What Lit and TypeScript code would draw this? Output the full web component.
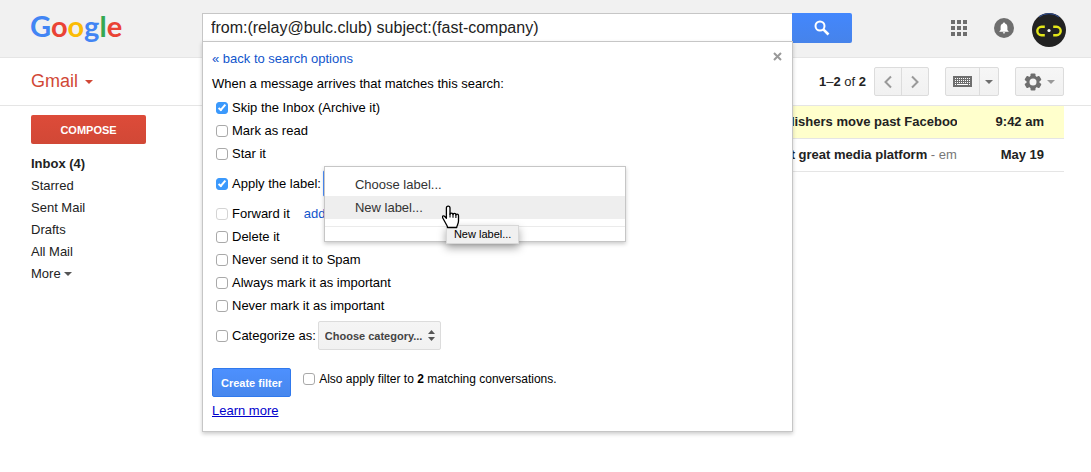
import { LitElement, html, css, svg, nothing } from "lit";
import { customElement, property } from "lit/decorators.js";

const baseStyles = css`
  *,
  *::before,
  *::after {
    box-sizing: border-box;
  }
  button,
  input,
  select {
    font: inherit;
    color: inherit;
    margin: 0;
  }
  button {
    padding: 0;
    cursor: pointer;
  }
  a {
    color: #15c;
    text-decoration: none;
  }
  svg {
    display: block;
  }
`;

interface Mail {
  sender: string;
  subject: string;
  snippet: string;
  date: string;
  selected: boolean;
}

const MAILS: Mail[] = [
  { sender: "Fast Company", subject: "Why publishers move past Facebook", snippet: "", date: "9:42 am", selected: true },
  { sender: "Fast Company", subject: "Your next great media platform", snippet: "email", date: "May 19", selected: false },
];

@customElement("filter-option")
class FilterOption extends LitElement {
  @property() label = "";
  @property({ type: Boolean }) checked = false;
  @property({ type: Boolean }) disabled = false;

  static styles = [
    baseStyles,
    css`
      :host {
        display: flex;
        align-items: center;
      }
      .option {
        display: flex;
        align-items: center;
        gap: 4px;
        white-space: nowrap;
      }
      .box {
        appearance: none;
        display: flex;
        justify-content: center;
        flex: none;
        width: 12px;
        height: 12px;
        border: 1px solid #a9a9a9;
        border-radius: 3px;
        background: #fff;
      }
      .box:disabled {
        border-color: #d4d4d4;
      }
      .box:checked {
        border-color: #3b99fc;
        background: #3b99fc;
      }
      .box:checked::after {
        content: "";
        width: 4px;
        height: 8px;
        border: solid #fff;
        border-width: 0 2px 2px 0;
        transform: rotate(40deg);
      }
    `,
  ];

  render() {
    return html`<label class="option">
      <input class="box" type="checkbox" .checked=${this.checked} ?disabled=${this.disabled} />
      <span>${this.label}<slot></slot></span>
    </label>`;
  }
}

@customElement("label-menu")
class LabelMenu extends LitElement {
  static styles = [
    baseStyles,
    css`
      :host {
        display: block;
        position: relative;
        width: 122px;
      }
      .trigger {
        display: block;
        width: 100%;
        height: 27px;
        border: 1px solid #4d90fe;
        border-radius: 2px;
        background: #f5f5f5;
      }
      .menu {
        position: absolute;
        z-index: 1;
        top: -4px;
        left: 1px;
        width: 302px;
        padding: 6px 0 14px;
        border: 1px solid #c6c6c6;
        background: #fff;
        box-shadow: 0 2px 4px rgba(0, 0, 0, 0.2);
        color: #333;
      }
      .item {
        display: block;
        position: relative;
        width: 100%;
        height: 23px;
        padding: 0 30px;
        border: 0;
        background: none;
        text-align: left;
      }
      .item.active {
        background: #eee;
      }
      .rule {
        height: 1px;
        margin: 7px 0 0;
        border: 0;
        background: #ebebeb;
      }
      .pointer {
        position: absolute;
        z-index: 2;
        top: 9px;
        left: 117px;
      }
      .tip {
        position: absolute;
        z-index: 1;
        top: 29px;
        left: 121px;
        padding: 0 7px;
        border: 1px solid #d8d8d8;
        background: #f0f0f0;
        box-shadow: 0 4px 8px rgba(0, 0, 0, 0.35);
        color: #000;
        font-size: 11px;
        line-height: 17px;
        white-space: nowrap;
      }
    `,
  ];

  render() {
    return html`
      <button class="trigger" aria-label="Choose label" aria-expanded="true"></button>
      <div class="menu" role="menu">
        <button class="item" role="menuitem">Choose label...</button>
        <button class="item active" role="menuitem">
          New label...
          <svg class="pointer" width="18" height="24" viewBox="0 0 18 24" aria-hidden="true">
            <path
              d="M6.2 1.2c-1.2 0-1.8.8-1.8 1.9v10.2l-1.6-1.8c-.8-.9-1.8-.9-2.2-.3-.4.6-.1 1.3.3 2l3.600 6.500c.6 1.100 1 1.500 1 2.800h9.200c0-1.500 1.800-3.500 1.800-6.500v-5.200c0-1.200-.7-1.700-1.400-1.700s-1.200.4-1.200.9c0-1-.6-1.600-1.500-1.600s-1.400.5-1.400 1.200c0-.8-.6-1.400-1.500-1.400-.8 0-1.500.5-1.500 1.100V3.100c0-1.100-.6-1.900-1.800-1.900z"
              fill="#fff"
              stroke="#000"
              stroke-width="1.300"
              stroke-linejoin="round"
            />
            <path d="M8 8.500v4M11 9v3.800M13.900 10v3" stroke="#000" stroke-width="1.100" />
          </svg>
          <span class="tip" role="tooltip">New label...</span>
        </button>
        <hr class="rule" />
      </div>
    `;
  }
}

@customElement("filter-panel")
class FilterPanel extends LitElement {
  static styles = [
    baseStyles,
    css`
      :host {
        display: block;
        padding: 8px 9px 11px;
        border: 1px solid #c6c6c6;
        background: #fff;
        box-shadow: 0 2px 4px rgba(0, 0, 0, 0.2);
        color: #000;
        font-size: 13px;
        line-height: 18px;
      }
      .top {
        display: flex;
        justify-content: space-between;
      }
      .close {
        width: 11px;
        height: 12px;
        border: 0;
        background: none;
      }
      .intro {
        margin: 7px 0 3px;
      }
      .options {
        display: flex;
        flex-direction: column;
        padding-left: 4px;
      }
      .row {
        display: flex;
        align-items: center;
        height: 23px;
      }
      .tall {
        height: 37px;
        gap: 2px;
      }
      .forward {
        gap: 14px;
      }
      .category {
        display: flex;
        align-items: center;
        position: relative;
      }
      .select {
        appearance: none;
        width: 123px;
        height: 29px;
        padding: 0 6px;
        border: 1px solid #dcdcdc;
        border-radius: 2px;
        background: linear-gradient(#f5f5f5, #f1f1f1);
        color: #444;
        font-size: 11px;
        font-weight: bold;
      }
      .arrows {
        position: absolute;
        right: 6px;
        pointer-events: none;
      }
      .actions {
        display: flex;
        align-items: flex-start;
        gap: 12px;
        margin-top: 14px;
        font-size: 12px;
      }
      .create {
        height: 29px;
        padding: 0 8px;
        border: 1px solid #3079ed;
        border-radius: 2px;
        background: linear-gradient(#4d90fe, #4787ed);
        color: #fff;
        font-size: 11px;
        font-weight: bold;
      }
      .also {
        height: 22px;
      }
      .learn {
        display: inline-block;
        margin-top: 5px;
        color: #00c;
        text-decoration: underline;
      }
    `,
  ];

  render() {
    return html`
      <div class="top">
        <a href="#">« back to search options</a>
        <button class="close" aria-label="Close">
          <svg width="11" height="12" viewBox="0 0 11 12">
            <path d="M2 3l7 7M9 3l-7 7" stroke="#999" stroke-width="2" />
          </svg>
        </button>
      </div>
      <p class="intro">When a message arrives that matches this search:</p>
      <div class="options">
        <filter-option class="row" label="Skip the Inbox (Archive it)" checked></filter-option>
        <filter-option class="row" label="Mark as read"></filter-option>
        <filter-option class="row" label="Star it"></filter-option>
        <div class="row tall">
          <filter-option label="Apply the label:" checked></filter-option>
          <label-menu></label-menu>
        </div>
        <div class="row forward">
          <filter-option label="Forward it" disabled></filter-option>
          <a href="#">add</a>
        </div>
        <filter-option class="row" label="Delete it"></filter-option>
        <filter-option class="row" label="Never send it to Spam"></filter-option>
        <filter-option class="row" label="Always mark it as important"></filter-option>
        <filter-option class="row" label="Never mark it as important"></filter-option>
        <div class="row tall">
          <filter-option label="Categorize as:"></filter-option>
          <div class="category">
            <select class="select" aria-label="Category">
              <option>Choose category...</option>
            </select>
            <svg class="arrows" width="7" height="11" viewBox="0 0 7 11" aria-hidden="true">
              <path d="M0 4L3.500 0 7 4zM0 7l3.500 4L7 7z" fill="#555" />
            </svg>
          </div>
        </div>
      </div>
      <div class="actions">
        <button class="create">Create filter</button>
        <filter-option class="also" label="Also apply filter to "><b>2</b> matching conversations.</filter-option>
      </div>
      <a class="learn" href="#">Learn more</a>
    `;
  }
}

@customElement("app-root")
class AppRoot extends LitElement {
  static styles = [
    baseStyles,
    css`
      :host {
        display: block;
        min-height: 100vh;
        overflow: hidden;
        background: #fff;
        color: #222;
        font-family: "Liberation Sans", Arial, sans-serif;
        font-size: 13px;
      }
      .header {
        display: flex;
        align-items: flex-start;
        height: 58px;
        padding: 13px 25px 0 30px;
        border-bottom: 1px solid #e5e5e5;
        background: #f1f1f1;
      }
      .logo {
        flex: none;
        width: 172px;
        font-family: Lato, sans-serif;
        font-size: 29px;
        font-weight: bold;
        line-height: 25px;
      }
      .blue {
        color: #4285f4;
      }
      .red {
        color: #ea4335;
      }
      .yellow {
        color: #fbbc05;
      }
      .green {
        color: #34a853;
      }
      .search {
        display: flex;
        flex: 0 1 650px;
      }
      .field {
        position: relative;
        flex: 1;
      }
      .query {
        display: block;
        width: 100%;
        height: 29px;
        padding: 0 8px;
        border: 1px solid #c6c6c6;
        border-right: 0;
        border-radius: 0;
        outline: 0;
        background: #fff;
        font-size: 16px;
      }
      .panel {
        position: absolute;
        z-index: 2;
        top: 28px;
        left: 0;
        right: -1px;
      }
      .go {
        display: grid;
        place-items: center;
        width: 60px;
        height: 30px;
        border: 0;
        border-radius: 0 2px 2px 0;
        background: linear-gradient(#4387fd, #4683ea);
      }
      .tools {
        display: flex;
        align-items: center;
        height: 34px;
        margin-left: auto;
      }
      .icon {
        border: 0;
        background: none;
      }
      .bell {
        margin: 0 18px 4px 27px;
      }
      .apps {
        margin-bottom: 4px;
      }
      .bar {
        display: flex;
        align-items: center;
        height: 48px;
        padding: 0 27px 0 31px;
        border-bottom: 1px solid #e5e5e5;
      }
      .gmail {
        display: flex;
        align-items: center;
        gap: 7px;
        border: 0;
        background: none;
        color: #d14836;
        font-size: 18px;
      }
      .count {
        margin: 0 8px 0 auto;
      }
      .group {
        display: flex;
        height: 29px;
        margin-right: 16px;
        border: 1px solid #dcdcdc;
        border-radius: 2px;
        background: linear-gradient(#f6f6f6, #f1f1f1);
      }
      .group:last-child {
        margin-right: 0;
      }
      .group button {
        display: flex;
        align-items: center;
        justify-content: center;
        gap: 5px;
        border: 0;
        background: none;
      }
      .group button + button {
        border-left: 1px solid #dcdcdc;
      }
      .page {
        width: 26px;
      }
      .page + .page {
        width: 27px;
      }
      .keys {
        width: 33px;
      }
      .drop {
        width: 19px;
      }
      .settings {
        width: 47px;
      }
      .body {
        display: flex;
        align-items: flex-start;
      }
      .side {
        flex: none;
        width: 202px;
        padding: 9px 31px;
      }
      .compose {
        width: 115px;
        height: 29px;
        border: 0;
        border-radius: 2px;
        background: linear-gradient(#dd4b39, #d14836);
        color: #fff;
        font-size: 11px;
        font-weight: bold;
      }
      .nav {
        display: flex;
        flex-direction: column;
        margin-top: 9px;
        line-height: 22px;
      }
      .nav a {
        display: flex;
        align-items: center;
        gap: 3px;
        color: #222;
      }
      .nav .current {
        font-weight: bold;
      }
      .mails {
        flex: 1;
        min-width: 0;
        margin-right: 27px;
        border-spacing: 0;
        table-layout: fixed;
        width: 0;
      }
      .mails td {
        height: 33px;
        padding: 0 0 1px;
        border-bottom: 1px solid #e5e5e5;
        overflow: hidden;
        white-space: nowrap;
      }
      .mails .sender {
        width: 534px;
        padding-right: 20px;
        text-align: right;
      }
      .mails .date {
        width: 107px;
        padding-right: 20px;
        text-align: right;
        font-weight: bold;
      }
      .selected {
        background: #ffffcc;
      }
      .snippet {
        color: #777;
      }
    `,
  ];

  private caret(color: string) {
    return html`<svg width="8" height="4" viewBox="0 0 8 4" aria-hidden="true">
      <path d="M0 0h8L4 4z" fill=${color} />
    </svg>`;
  }

  private gridIcon() {
    const steps = [0, 6, 12];
    return html`<svg width="16" height="16" viewBox="0 0 16 16">
      ${steps.map((y) => steps.map((x) => svg`<rect x=${x} y=${y} width="4" height="4" fill="#6e6e6e" />`))}
    </svg>`;
  }

  private keyboardIcon() {
    const cols = [2, 4, 6, 8, 10, 12, 14, 16];
    return html`<svg width="19" height="11" viewBox="0 0 19 11">
      <rect width="19" height="11" fill="#6e6e6e" />
      ${[2, 4, 6].map((y) => cols.map((x) => svg`<rect x=${x} y=${y} width="1" height="1" fill="#fff" />`))}
      <path d="M2 8h1v1H2zM4 8h11v1H4zM16 8h1v1h-1z" fill="#fff" />
    </svg>`;
  }

  private gearIcon() {
    return html`<svg width="18" height="18" viewBox="0 0 18 18">
      ${[0, 60, 120].map(
        (a) => svg`<rect x="6.500" y="0.500" width="5" height="17" rx="1" fill="#6e6e6e" transform="rotate(${a} 9 9)" />`
      )}
      <circle cx="9" cy="9" r="6.500" fill="#6e6e6e" />
      <circle cx="9" cy="9" r="3.500" fill="#f4f4f4" />
    </svg>`;
  }

  render() {
    return html`
      <header class="header">
        <div class="logo" role="img" aria-label="Google">
          <span class="blue">G</span><span class="red">o</span><span class="yellow">o</span><span class="blue">g</span
          ><span class="green">l</span><span class="red">e</span>
        </div>
        <form class="search">
          <div class="field">
            <input class="query" aria-label="Search mail" value="from:(relay@bulc.club) subject:(fast-company)" />
            <filter-panel class="panel"></filter-panel>
          </div>
          <button class="go" type="button" aria-label="Search">
            <svg width="16" height="16" viewBox="0 0 16 16">
              <circle cx="6" cy="6" r="4.500" fill="none" stroke="#fff" stroke-width="2" />
              <path d="M9.300 9.300l5.200 5.200" stroke="#fff" stroke-width="2.600" />
            </svg>
          </button>
        </form>
        <div class="tools">
          <button class="icon apps" aria-label="Apps">${this.gridIcon()}</button>
          <button class="icon bell" aria-label="Notifications">
            <svg width="20" height="20" viewBox="0 0 20 20">
              <circle cx="10" cy="10" r="10" fill="#6e6e6e" />
              <path
                d="M10 4.500c-.7 0-1 .4-1 1C7.400 6 6.600 7.300 6.600 9v3l-1.200 1.200v.6h9.200v-.6L13.400 12V9c0-1.700-.8-3-2.400-3.500 0-.6-.3-1-1-1zM8.800 14.300a1.200 1.200 0 0 0 2.400 0z"
                fill="#fff"
              />
            </svg>
          </button>
          <button class="icon" aria-label="Account">
            <svg width="34" height="34" viewBox="0 0 34 34">
              <circle cx="17" cy="17" r="17" fill="#222" />
              <path d="M7 4A16.500 16.500 0 0 1 27 4" fill="none" stroke="#2f4f9a" stroke-width="1" />
              <path d="M12.800 13.800h-3.300a4.200 4.200 0 0 0 0 8.400h3.300" fill="none" stroke="#e3e619" stroke-width="2.400" />
              <path d="M21.200 13.800h3.300a4.200 4.200 0 0 1 0 8.400h-3.300" fill="none" stroke="#e3e619" stroke-width="2.400" />
              <circle cx="17" cy="17.500" r="1.600" fill="#fff" />
            </svg>
          </button>
        </div>
      </header>

      <div class="bar">
        <button class="gmail">Gmail ${this.caret("#d14836")}</button>
        <span class="count"><b>1</b>–<b>2</b> of <b>2</b></span>
        <div class="group">
          <button class="page" aria-label="Newer">
            <svg width="10" height="14" viewBox="0 0 10 14">
              <path d="M8 1.500L2.500 7 8 12.500" fill="none" stroke="#999" stroke-width="2" />
            </svg>
          </button>
          <button class="page" aria-label="Older">
            <svg width="10" height="14" viewBox="0 0 10 14">
              <path d="M2 1.500L7.500 7 2 12.500" fill="none" stroke="#999" stroke-width="2" />
            </svg>
          </button>
        </div>
        <div class="group">
          <button class="keys" aria-label="Keyboard">${this.keyboardIcon()}</button>
          <button class="drop" aria-label="Input tools">${this.caret("#6e6e6e")}</button>
        </div>
        <div class="group">
          <button class="settings" aria-label="Settings">${this.gearIcon()} ${this.caret("#999")}</button>
        </div>
      </div>

      <div class="body">
        <div class="side">
          <button class="compose">COMPOSE</button>
          <nav class="nav">
            <a class="current" href="#">Inbox (4)</a>
            <a href="#">Starred</a>
            <a href="#">Sent Mail</a>
            <a href="#">Drafts</a>
            <a href="#">All Mail</a>
            <a href="#">More ${this.caret("#555")}</a>
          </nav>
        </div>
        <table class="mails">
          <tbody>
            ${MAILS.map(
              (m) => html`<tr class=${m.selected ? "selected" : nothing}>
                <td class="sender">${m.sender}</td>
                <td><b>${m.subject}</b>${m.snippet ? html`<span class="snippet"> - ${m.snippet}</span>` : nothing}</td>
                <td class="date">${m.date}</td>
              </tr>`
            )}
          </tbody>
        </table>
      </div>
    `;
  }
}
